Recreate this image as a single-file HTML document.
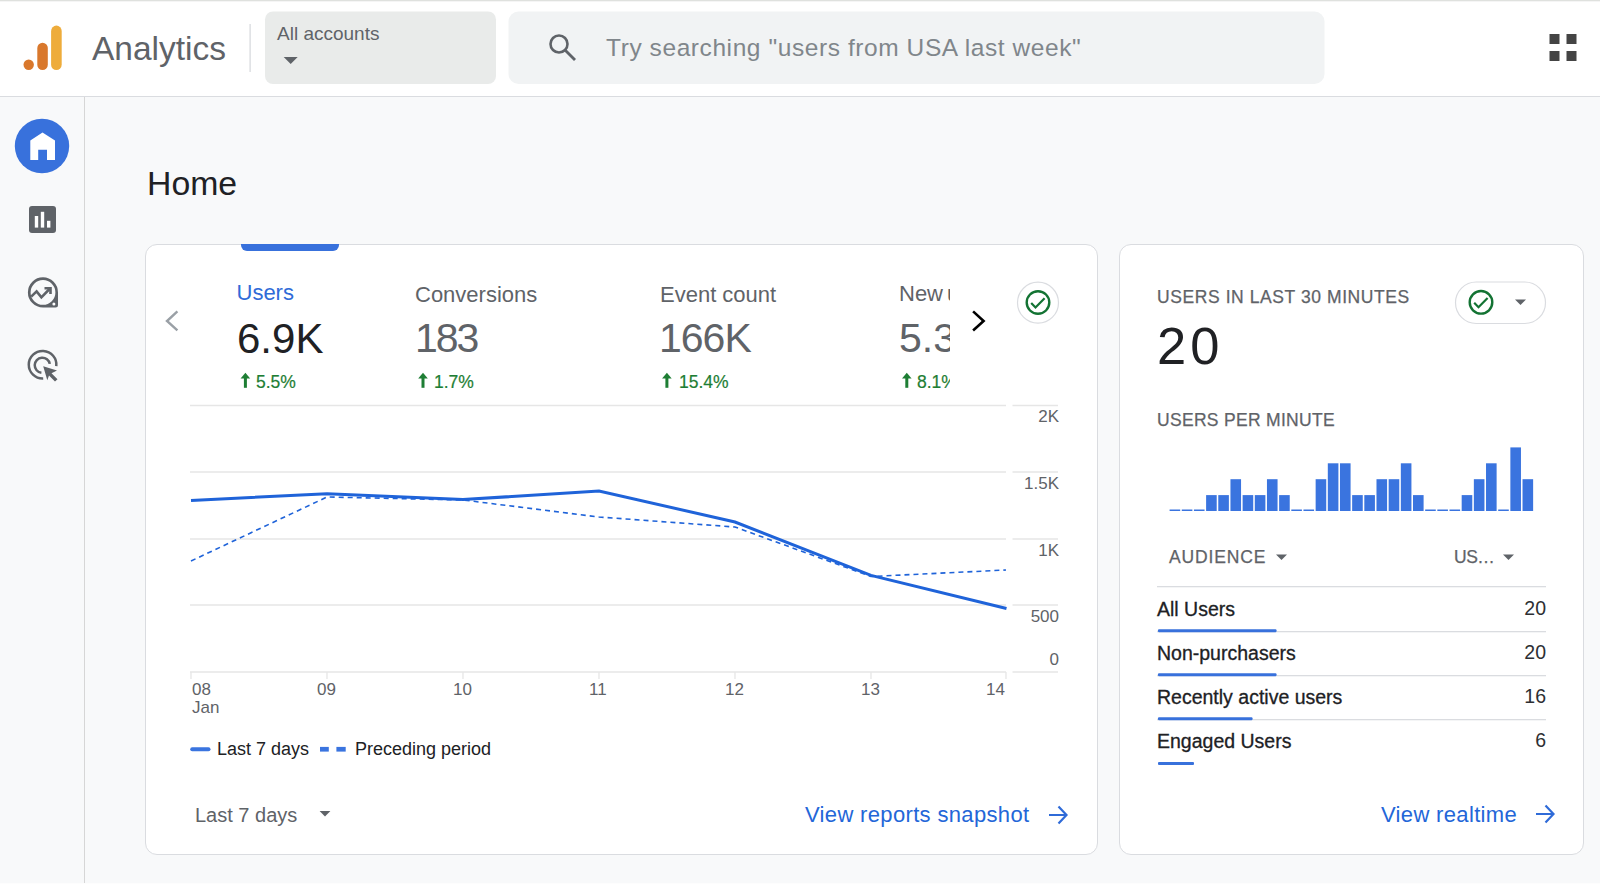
<!DOCTYPE html>
<html><head><meta charset="utf-8">
<style>
*{margin:0;padding:0;box-sizing:border-box}
html,body{width:1600px;height:884px;overflow:hidden}
body{background:#f8f9fa;font-family:"Liberation Sans",sans-serif;position:relative;color:#202124}
.a{position:absolute;white-space:nowrap}
#topline{left:0;top:0;width:1600px;height:1px;background:#dfe1de}
#topline2{left:0;top:1px;width:1600px;height:1px;background:#f5f5f5}
#hdr{left:0;top:2px;width:1600px;height:95px;background:#fff;border-bottom:1px solid #dadce0}
#side{left:84px;top:97px;width:1px;height:787px;background:#d6d6d6}
#botline{left:0;top:883px;width:1600px;height:1px;background:#fdfdfd}
.card{background:#fff;border:1px solid #dadce0;border-radius:12px}
.lbl{font-size:22px;color:#5f6368;line-height:1}
.big{font-size:41px;color:#5f6368;line-height:1}
.pct{font-size:17.5px;color:#1e7e34;line-height:1;font-weight:normal;-webkit-text-stroke:0.2px #1e7e34}
.ax{font-size:17px;color:#5f6368;line-height:1}
.cap{font-size:17.5px;color:#5f6368;letter-spacing:0.4px;line-height:1;-webkit-text-stroke:0.25px #5f6368}
.row{font-size:19.5px;color:#202124;line-height:1;-webkit-text-stroke:0.3px #202124}
.val{font-size:19.5px;color:#2d2f33;line-height:1}
.link{font-size:22px;color:#2366d8;line-height:1;letter-spacing:0.34px}
</style></head><body>
<div class="a" id="topline"></div>
<div class="a" id="hdr"></div>
<div class="a" id="topline2"></div>

<!-- logo -->
<svg class="a" style="left:0;top:0" width="1600" height="884" viewBox="0 0 1600 884">
  <!-- logo -->
  <circle cx="28.7" cy="64.8" r="5.2" fill="#d9782c"/>
  <rect x="37.3" y="42.7" width="10.5" height="27.4" rx="5.25" fill="#d9782c"/>
  <rect x="51.1" y="25.6" width="10.6" height="44.5" rx="5.3" fill="#eeac3b"/>
  <!-- divider -->
  <rect x="249.5" y="24" width="1.2" height="48" fill="#d5d7dc"/>
  <!-- account box -->
  <rect x="265" y="11.5" width="231" height="72.5" rx="8" fill="#e9ebea"/>
  <path d="M283.7 57 L297.7 57 L290.7 64 Z" fill="#5f6368"/>
  <!-- search box -->
  <rect x="508.5" y="11.5" width="816" height="72.5" rx="10" fill="#f1f3f4"/>
  <circle cx="559" cy="44" r="8.5" fill="none" stroke="#5f6368" stroke-width="2.6"/>
  <path d="M565 50 L575 60" stroke="#5f6368" stroke-width="2.8"/>
  <!-- apps grid -->
  <rect x="1549.5" y="34" width="10" height="10" fill="#444"/>
  <rect x="1566.5" y="34" width="10" height="10" fill="#444"/>
  <rect x="1549.5" y="51" width="10" height="10" fill="#444"/>
  <rect x="1566.5" y="51" width="10" height="10" fill="#444"/>

  <!-- sidebar icons -->
  <circle cx="42" cy="146" r="27.2" fill="#3871dc"/>
  <path d="M30.3 160 L30.3 140.5 L42.5 132.6 L55 140.5 L55 160 L47 160 L47 149.7 L38.2 149.7 L38.2 160 Z" fill="#fff"/>
  <rect x="29" y="206" width="27" height="27" rx="3" fill="#5f6368"/>
  <rect x="34.8" y="216" width="3.4" height="11.6" fill="#fff"/>
  <rect x="40.8" y="211.8" width="3.4" height="15.8" fill="#fff"/>
  <rect x="47" y="220.8" width="3.4" height="6.8" fill="#fff"/>
  <!-- explore -->
  <path fill-rule="evenodd" fill="#5f6368" d="M43 277.3 A15.1 15.1 0 0 1 58 292.4 L58 305 Q58 307.5 55.5 307.5 L43 307.5 A15.1 15.1 0 0 1 27.9 292.4 A15.1 15.1 0 0 1 43 277.3 Z M43 280 A12.4 12.4 0 1 0 43 304.8 A12.4 12.4 0 1 0 43 280 Z"/>
  <circle cx="53.9" cy="304" r="1.5" fill="#fff"/>
  <path d="M31.2 296.6 L36.6 291.4 L41.4 297.4 L50 288.5" fill="none" stroke="#5f6368" stroke-width="2.6"/>
  <path d="M44.5 288.2 L50.5 288.2 L50.5 294" fill="none" stroke="#5f6368" stroke-width="2.6"/>
  <!-- advertising -->
  <path d="M56.3 366.2 A13.8 13.8 0 1 0 43.2 378.5" fill="none" stroke="#5f6368" stroke-width="2.5"/>
  <path d="M49.8 363.9 A7.6 7.6 0 1 0 41.4 372.8" fill="none" stroke="#5f6368" stroke-width="2.5"/>
  <path d="M43.2 366.2 L57 370.4 L51.5 373.2 L57.5 379.2 L55 381.5 L49 375.5 L47.3 380.3 Z" fill="#5f6368"/>
</svg>

<div class="a" id="side"></div>
<div class="a" id="botline"></div>

<!-- header text -->
<div class="a" style="left:92px;top:31.5px;font-size:33.5px;color:#5f6368;line-height:1">Analytics</div>
<div class="a" style="left:277px;top:24px;font-size:19px;color:#5f6368;line-height:1">All accounts</div>
<div class="a" style="left:606px;top:36px;font-size:24.5px;color:#80868b;line-height:1;letter-spacing:0.58px">Try searching "users from USA last week"</div>

<div class="a" style="left:147px;top:167px;font-size:33.8px;color:#202124;line-height:1">Home</div>

<!-- card 1 -->
<div class="a card" style="left:145px;top:243.5px;width:952.5px;height:611.5px"></div>
<div class="a" style="left:240.5px;top:244px;width:98px;height:6.5px;background:#3871dc;border-radius:0 0 6px 6px"></div>

<div class="a lbl" style="left:236.5px;top:282px;color:#2f6bd8">Users</div>
<div class="a lbl" style="left:415px;top:283.5px">Conversions</div>
<div class="a lbl" style="left:660px;top:283.5px">Event count</div>
<div class="a" style="left:899px;top:283px;width:51px;overflow:hidden"><span class="lbl" style="word-spacing:-2px">New users</span></div>

<div class="a big" style="left:237px;top:318px;color:#202124;font-size:42px">6.9K</div>
<div class="a big" style="left:415px;top:318px;letter-spacing:-2px">183</div>
<div class="a big" style="left:659px;top:318px;letter-spacing:-1px">166K</div>
<div class="a" style="left:899px;top:318px;width:51px;overflow:hidden"><span class="big">5.3K</span></div>

<div class="a pct" style="left:256px;top:374px">5.5%</div>
<div class="a pct" style="left:434px;top:374px">1.7%</div>
<div class="a pct" style="left:679px;top:374px">15.4%</div>
<div class="a" style="left:917px;top:374px;width:33px;overflow:hidden"><span class="pct">8.1%</span></div>
<svg class="a" style="left:0;top:0" width="1600" height="884" viewBox="0 0 1600 884">
  <g fill="#1e7e34"><rect x="243.9" y="377" width="3" height="10.8"/><path d="M240.6 378.4 L245.4 372.8 L250.2 378.4 Z"/><rect x="421.5" y="377" width="3" height="10.8"/><path d="M418.2 378.4 L423.0 372.8 L427.8 378.4 Z"/><rect x="665.4" y="377" width="3" height="10.8"/><path d="M662.1 378.4 L666.9 372.8 L671.7 378.4 Z"/><rect x="905.3" y="377" width="3" height="10.8"/><path d="M902.0 378.4 L906.8 372.8 L911.6 378.4 Z"/></g>
  <!-- chevrons -->
  <path d="M177.4 311.4 L167 321 L177.4 330.4" fill="none" stroke="#9aa0a6" stroke-width="2.4"/>
  <path d="M973.1 311.4 L983.6 321 L973.1 330.5" fill="none" stroke="#000" stroke-width="2.6"/>
  <!-- check circle -->
  <circle cx="1038" cy="302.7" r="20.5" fill="#fff" stroke="#dadce0" stroke-width="1.2"/>
  <circle cx="1038" cy="302.5" r="11.3" fill="none" stroke="#137333" stroke-width="2.4"/>
  <path d="M1031.2 303 L1035.5 307.4 L1044.6 298.2" fill="none" stroke="#137333" stroke-width="2.2"/>

  <!-- grid -->
  <g stroke="#e6e6e6" stroke-width="1.3">
    <path d="M190 405.5 H1006 M1012.5 405.5 H1058"/>
    <path d="M190 472 H1006 M1012.5 472 H1058"/>
    <path d="M190 539 H1006 M1012.5 539 H1058"/>
    <path d="M190 605 H1006 M1012.5 605 H1058"/>
    <path d="M190 672 H1006 M1012.5 672 H1058"/>
    <path d="M191 672 V679 M327 672 V679 M463 672 V679 M599 672 V679 M735 672 V679 M871 672 V679 M1006 672 V679"/>
  </g>
  <!-- lines -->
  <polyline points="191,500.4 327,493.8 463,499.6 599,491 735,522 871,575.4 1006.5,608.5" fill="none" stroke="#1f63d9" stroke-width="3"/>
  <polyline points="191,561 327,497 463,500 599,517 735,527 871,576.5 1006,570" fill="none" stroke="#1f63d9" stroke-width="1.6" stroke-dasharray="5,4"/>
  <!-- legend -->
  <rect x="190.2" y="747.2" width="20.3" height="4" rx="2" fill="#3a74df"/>
  <rect x="320" y="746.9" width="8.8" height="4.7" fill="#3a74df"/>
  <rect x="336.4" y="746.9" width="9.3" height="4.7" fill="#3a74df"/>
  <path d="M319.6 811 L330.4 811 L325 816.5 Z" fill="#5f6368"/>
  <!-- arrow links -->
  <path d="M1049 815 H1066 M1058.5 806.5 L1066.5 815 L1058.5 823.5" fill="none" stroke="#2f6bd8" stroke-width="2.2"/>
</svg>

<!-- axis labels -->
<div class="a ax" style="left:1020px;top:408px;width:39px;text-align:right">2K</div>
<div class="a ax" style="left:1000px;top:475px;width:59px;text-align:right">1.5K</div>
<div class="a ax" style="left:1000px;top:542px;width:59px;text-align:right">1K</div>
<div class="a ax" style="left:1000px;top:607.5px;width:59px;text-align:right">500</div>
<div class="a ax" style="left:1000px;top:650.5px;width:59px;text-align:right">0</div>

<div class="a ax" style="left:192px;top:681px">08</div>
<div class="a ax" style="left:192px;top:699px">Jan</div>
<div class="a ax" style="left:317px;top:681px">09</div>
<div class="a ax" style="left:453px;top:681px">10</div>
<div class="a ax" style="left:589px;top:681px">11</div>
<div class="a ax" style="left:725px;top:681px">12</div>
<div class="a ax" style="left:861px;top:681px">13</div>
<div class="a ax" style="left:986px;top:681px">14</div>

<div class="a" style="left:217px;top:740px;font-size:18px;color:#202124;line-height:1">Last 7 days</div>
<div class="a" style="left:355px;top:740px;font-size:18px;color:#202124;line-height:1">Preceding period</div>

<div class="a" style="left:195px;top:805px;font-size:20px;color:#5f6368;line-height:1">Last 7 days</div>
<div class="a link" style="left:805px;top:804px">View reports snapshot</div>

<!-- card 2 -->
<div class="a card" style="left:1119px;top:243.5px;width:465px;height:611.5px"></div>
<div class="a cap" style="left:1157px;top:288.5px;letter-spacing:0.58px">USERS IN LAST 30 MINUTES</div>
<div class="a" style="left:1157px;top:320px;font-size:52.5px;color:#202124;line-height:1;letter-spacing:4px">20</div>
<div class="a cap" style="left:1157px;top:412px;letter-spacing:0.3px">USERS PER MINUTE</div>

<svg class="a" style="left:0;top:0" width="1600" height="884" viewBox="0 0 1600 884" id="rt">
  <rect x="1455.5" y="282" width="90" height="41.5" rx="20.75" fill="#fff" stroke="#dadce0" stroke-width="1.2"/>
  <circle cx="1481" cy="302.3" r="11.3" fill="none" stroke="#137333" stroke-width="2.4"/>
  <path d="M1474.2 302.8 L1478.5 307.2 L1487.6 298" fill="none" stroke="#137333" stroke-width="2.2"/>
  <path d="M1515 299.5 L1526 299.5 L1520.5 305 Z" fill="#5f6368"/>
  <g id="bars" fill="#3a74df"><rect x="1169.60" y="509.5" width="10.6" height="1.5"/><rect x="1181.77" y="509.5" width="10.6" height="1.5"/><rect x="1193.94" y="509.5" width="10.6" height="1.5"/><rect x="1206.11" y="495.1" width="10.6" height="15.9"/><rect x="1218.28" y="495.1" width="10.6" height="15.9"/><rect x="1230.45" y="479.2" width="10.6" height="31.8"/><rect x="1242.62" y="495.1" width="10.6" height="15.9"/><rect x="1254.79" y="495.1" width="10.6" height="15.9"/><rect x="1266.96" y="479.2" width="10.6" height="31.8"/><rect x="1279.13" y="495.1" width="10.6" height="15.9"/><rect x="1291.30" y="509.5" width="10.6" height="1.5"/><rect x="1303.47" y="509.5" width="10.6" height="1.5"/><rect x="1315.64" y="479.2" width="10.6" height="31.8"/><rect x="1327.81" y="463.3" width="10.6" height="47.7"/><rect x="1339.98" y="463.3" width="10.6" height="47.7"/><rect x="1352.15" y="495.1" width="10.6" height="15.9"/><rect x="1364.32" y="495.1" width="10.6" height="15.9"/><rect x="1376.49" y="479.2" width="10.6" height="31.8"/><rect x="1388.66" y="479.2" width="10.6" height="31.8"/><rect x="1400.83" y="463.3" width="10.6" height="47.7"/><rect x="1413.00" y="495.1" width="10.6" height="15.9"/><rect x="1425.17" y="509.5" width="10.6" height="1.5"/><rect x="1437.34" y="509.5" width="10.6" height="1.5"/><rect x="1449.51" y="509.5" width="10.6" height="1.5"/><rect x="1461.68" y="495.1" width="10.6" height="15.9"/><rect x="1473.85" y="479.2" width="10.6" height="31.8"/><rect x="1486.02" y="463.3" width="10.6" height="47.7"/><rect x="1498.19" y="509.5" width="10.6" height="1.5"/><rect x="1510.36" y="447.4" width="10.6" height="63.6"/><rect x="1522.53" y="479.2" width="10.6" height="31.8"/></g>
  <!-- audience header -->
  <path d="M1276 554.5 L1287 554.5 L1281.5 560 Z" fill="#5f6368"/>
  <path d="M1503 554.5 L1514 554.5 L1508.5 560 Z" fill="#5f6368"/>
  <g fill="#dadce0">
    <rect x="1157" y="586" width="389" height="1.3"/>
    <rect x="1157" y="631" width="389" height="1.3"/>
    <rect x="1157" y="675" width="389" height="1.3"/>
    <rect x="1157" y="719" width="389" height="1.3"/>
  </g>
  <g fill="#3871dc">
    <rect x="1158" y="629.2" width="118.5" height="3" rx="1"/>
    <rect x="1158" y="673.2" width="118.5" height="3" rx="1"/>
    <rect x="1158" y="717.2" width="94.5" height="3" rx="1"/>
    <rect x="1158" y="762" width="36" height="3" rx="1"/>
  </g>
  <path d="M1536 814 H1553 M1545.5 805.5 L1553.5 814 L1545.5 822.5" fill="none" stroke="#2f6bd8" stroke-width="2.2"/>
</svg>

<div class="a cap" style="left:1169px;top:549px;letter-spacing:0.85px">AUDIENCE</div>
<div class="a cap" style="left:1454px;top:549px;letter-spacing:-0.5px">US…</div>

<div class="a row" style="left:1157px;top:599.7px">All Users</div>
<div class="a val" style="left:1446px;top:599px;width:100px;text-align:right">20</div>
<div class="a row" style="left:1157px;top:644.3px">Non-purchasers</div>
<div class="a val" style="left:1446px;top:643.2px;width:100px;text-align:right">20</div>
<div class="a row" style="left:1157px;top:688.4px">Recently active users</div>
<div class="a val" style="left:1446px;top:687.2px;width:100px;text-align:right">16</div>
<div class="a row" style="left:1157px;top:732.4px">Engaged Users</div>
<div class="a val" style="left:1446px;top:731.2px;width:100px;text-align:right">6</div>

<div class="a link" style="left:1381px;top:804px">View realtime</div>

</body></html>
